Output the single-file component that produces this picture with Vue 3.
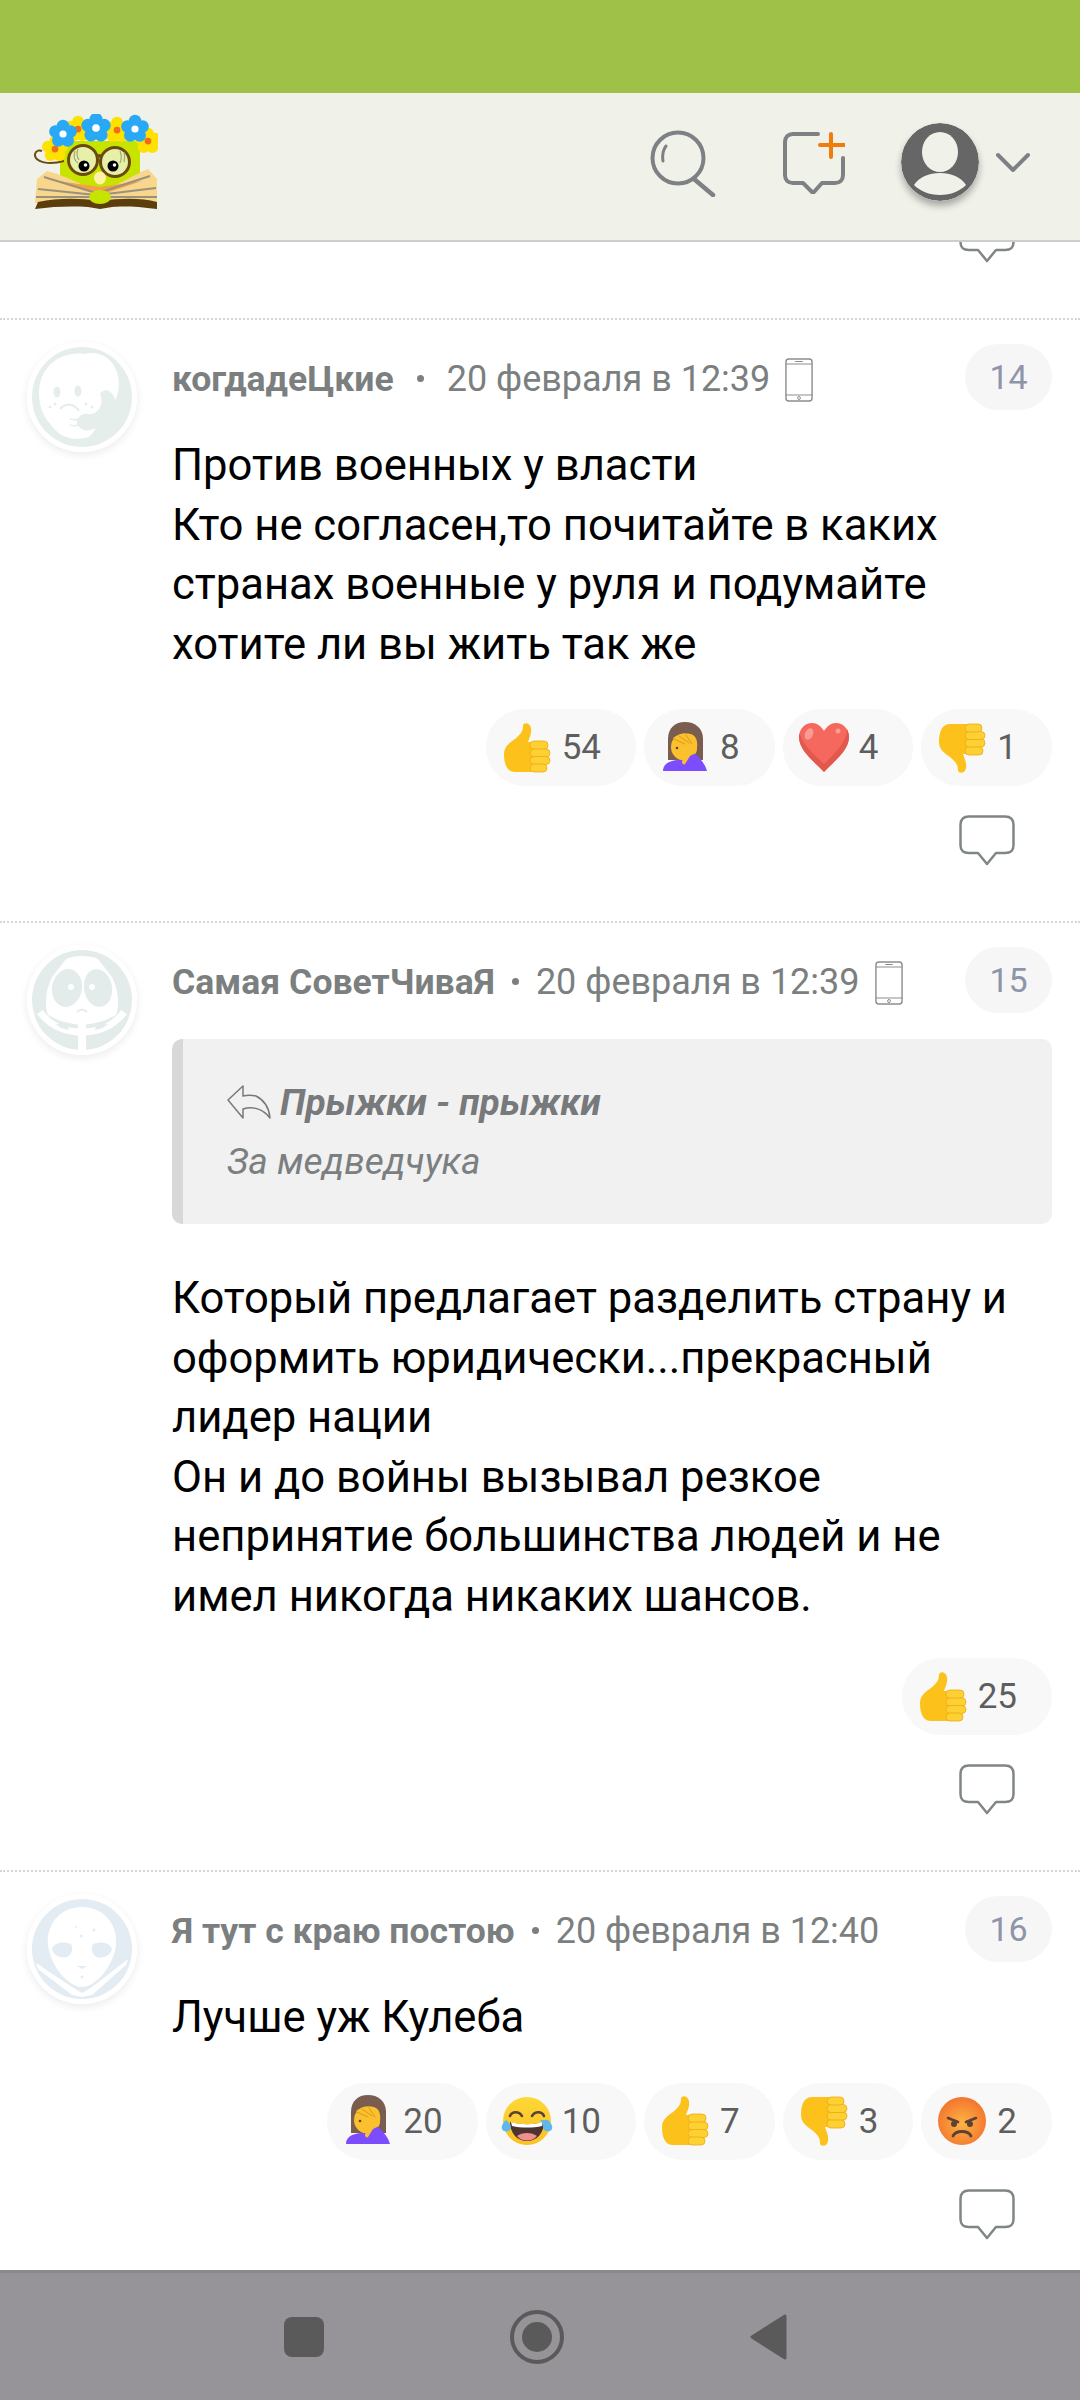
<script setup>
const comments = [
  {
    id: 14,
    name: 'когдадеЦкие',
    date: '20 февраля в 12:39',
    avatar: 'elephant',
    phone: true,
    wideDot: true,
    text: 'Против военных у власти\nКто не согласен,то почитайте в каких странах военные у руля и подумайте хотите ли вы жить так же',
    reactions: [
      { icon: 'like', count: 54 },
      { icon: 'facepalm', count: 8 },
      { icon: 'heart', count: 4 },
      { icon: 'dislike', count: 1 },
    ],
  },
  {
    id: 15,
    name: 'Самая СоветЧиваЯ',
    date: '20 февраля в 12:39',
    avatar: 'monster',
    phone: true,
    quote: { author: 'Прыжки - прыжки', text: 'За медведчука' },
    text: 'Который предлагает разделить страну и оформить юридически...прекрасный лидер нации\nОн и до войны вызывал резкое непринятие большинства людей и не имел никогда никаких шансов.',
    reactions: [{ icon: 'like', count: 25 }],
  },
  {
    id: 16,
    name: 'Я тут с краю постою',
    date: '20 февраля в 12:40',
    avatar: 'alien',
    text: 'Лучше уж Кулеба',
    reactions: [
      { icon: 'facepalm', count: 20 },
      { icon: 'joy', count: 10 },
      { icon: 'like', count: 7 },
      { icon: 'dislike', count: 3 },
      { icon: 'angry', count: 2 },
    ],
  },
]

// flowers of the logo wreath
const flowers = [
  { x: 35, y: 58, r: 7.5, petal: '#ffe100', core: '#f26a1b' },
  { x: 58, y: 38, r: 7.5, petal: '#ffe100', core: '#f26a1b' },
  { x: 97, y: 39, r: 7.5, petal: '#ffe100', core: '#f26a1b' },
  { x: 128, y: 50, r: 7.5, petal: '#ffe100', core: '#f26a1b' },
  { x: 43, y: 43, r: 8, petal: '#29a9f5', core: '#fff' },
  { x: 76, y: 37, r: 8.5, petal: '#29a9f5', core: '#fff' },
  { x: 115, y: 38, r: 8, petal: '#29a9f5', core: '#fff' },
]
const petals = [0, 72, 144, 216, 288]
</script>

<template>
  <div class="page">
    <svg class="sprite" aria-hidden="true">
      <defs>
        <radialGradient id="angry-bg" cx="50%" cy="55%" r="55%">
          <stop offset="0" stop-color="#fcb643" />
          <stop offset="1" stop-color="#f4742f" />
        </radialGradient>
        <linearGradient id="joy-bg" x1="0" y1="0" x2="0" y2="1">
          <stop offset="0" stop-color="#fdd835" />
          <stop offset="1" stop-color="#fbbf24" />
        </linearGradient>
        <symbol id="like" viewBox="0 0 52 52">
          <path d="M3 32c0-7 5-11 11-15 6-5 8-8 8-13 0-4 7-4 8 2 1 6-2 10-3 14h10v30H14C7 50 3 44 3 32z" fill="#fcc21b" />
          <g fill="#fdd033" stroke="#eeaa12" stroke-width=".8">
            <rect x="29" y="19" width="18" height="8.5" rx="4" />
            <rect x="29" y="27" width="20" height="8" rx="4" />
            <rect x="29" y="34.5" width="20" height="8" rx="4" />
            <rect x="29" y="42" width="17" height="8" rx="4" />
          </g>
        </symbol>
        <symbol id="dislike" viewBox="0 0 52 52">
          <use href="#like" width="52" height="52" transform="matrix(1 0 0 -1 0 52)" />
        </symbol>
        <symbol id="heart" viewBox="0 0 52 52">
          <path d="M26 50C18 41 1 29 1 15 1 7 7 1 14 1c5 0 9 3 12 8 3-5 7-8 12-8 7 0 13 6 13 14 0 14-17 26-25 35z" fill="#f4685e" />
          <path d="M26 50c8-9 25-21 25-35 0-3-1-6-2-8 0 14-15 27-23 35-8-8-21-18-24-30-1 1-1 2-1 3 0 14 17 26 25 35z" fill="#e2574e" />
          <ellipse cx="11" cy="12" rx="4" ry="6" transform="rotate(25 11 12)" fill="#fa9b93" />
          <circle cx="40" cy="9" r="2.5" fill="#fa9b93" />
        </symbol>
        <symbol id="facepalm" viewBox="0 0 52 52">
          <path d="M9 38V17C9 6 16 0 26 0s18 6 18 17v21z" fill="#7b5d50" />
          <ellipse cx="25" cy="25" rx="13" ry="13.5" fill="#fbc02d" />
          <path d="M4 49c0-7 6-10 14-11h6l6 11z" fill="#7c4dff" />
          <path d="M27 31l6-2c6 5 13 12 15 20H22l4-8z" fill="#7c4dff" />
          <path d="M14 16c5-4 14-6 20-3 5 3 5 11 3 18l-6 3-5 8c-1 1-3 0-3-2l2-9-3-6z" fill="#fbc02d" />
          <path d="M15 17l11 5M20 14l10 7M27 13l6 9" fill="none" stroke="#d99a16" stroke-width="1" stroke-linecap="round" />
          <circle cx="18" cy="26" r="1.300" fill="#5d4037" />
        </symbol>
        <symbol id="joy" viewBox="0 0 52 52">
          <circle cx="26" cy="26" r="24" fill="url(#joy-bg)" />
          <path d="M9 21c2-5 9-5 12 0M31 21c3-5 10-5 12 0" fill="none" stroke="#5d4037" stroke-width="2.6" stroke-linecap="round" />
          <path d="M9 27c10 3 24 3 34 0 0 11-7 19-17 19S9 38 9 27z" fill="#4e342e" />
          <path d="M10 27c10 3 22 3 32 0l-1 4c-9 2-21 2-30 0z" fill="#fff" />
          <path d="M16 41c5-4 15-4 20 0-5 6-15 6-20 0z" fill="#ef8f8f" />
          <path d="M5 25c-3 3-5 6-4 9 1 3 6 3 8 1 2-3 0-7-4-10zM47 25c3 3 5 6 4 9-1 3-6 3-8 1-2-3 0-7-4-10z" fill="#5fb7ea" />
        </symbol>
        <symbol id="angry" viewBox="0 0 52 52">
          <circle cx="26" cy="26" r="24" fill="url(#angry-bg)" />
          <path d="M12 23l10 4M40 23l-10 4" stroke="#5d4037" stroke-width="2.6" stroke-linecap="round" />
          <circle cx="18" cy="29" r="3" fill="#5d4037" />
          <circle cx="34" cy="29" r="3" fill="#5d4037" />
          <path d="M17 41c3-6 15-6 18 0" fill="none" stroke="#5d4037" stroke-width="2.8" stroke-linecap="round" />
        </symbol>
      </defs>
    </svg>

    <div class="status-bar"></div>

    <header class="top-bar">
      <svg class="logo" viewBox="14 23 124 96" width="124" height="96">
        <path d="M40 50h80v36l-40 14-40-14z" fill="#c6e400" />
        <path d="M44 70C30 74 14 72 15 63c1-4 5-4 7-3" fill="none" stroke="#6b4a10" stroke-width="2" />
        <path d="M15 112l2-24 10-8c16 4 32 12 53 22 21-10 34-18 48-24l9 10v24z" fill="#f8d68c" />
        <path d="M80 104L38 90l42 6 42-6z" fill="#f3a04a" />
        <g stroke="#9a917c" stroke-width="2" fill="none">
          <path d="M18 98l58 6M16 106l60 0M24 86l52 16M136 97l-58 7M137 106l-60 0M130 85l-52 17" />
        </g>
        <path d="M15 118l3-7c20-4 40-4 62-1 22-3 42-3 57 1v7c-20-3-38-3-45-2l-12 2-12-2c-13-1-33-1-53 2z" fill="#5c3d0c" />
        <ellipse cx="80" cy="106" rx="11" ry="7" fill="#c6e400" />
        <g stroke="#6b4a10" stroke-width="3" fill="#e6f0a8">
          <circle cx="63" cy="69" r="14.5" />
          <circle cx="95" cy="71" r="14.5" />
          <path d="M77 66c2-2 3-2 4 0" fill="none" />
        </g>
        <path d="M55 60c-2 6 0 10 3 12M100 60c2 5 2 8 0 12M58 58c-2 5-1 8 1 11M104 61c1 4 1 7 0 10" fill="none" stroke="#9da877" stroke-width="1.2" />
        <circle cx="64" cy="75" r="5.5" fill="#000" />
        <circle cx="93" cy="75" r="5.5" fill="#000" />
        <circle cx="65.5" cy="74" r="1.8" fill="#fff" />
        <circle cx="94.5" cy="74" r="1.8" fill="#fff" />
        <ellipse cx="80" cy="87" rx="6" ry="6.5" fill="#fff2a8" />
        <g v-for="(f, i) in flowers" :key="i">
          <circle
            v-for="a in petals"
            :key="a"
            :cx="f.x + Math.cos((a * Math.PI) / 180 - 1.57) * f.r"
            :cy="f.y + Math.sin((a * Math.PI) / 180 - 1.57) * f.r"
            :r="f.r * 0.78"
            :fill="f.petal"
          />
          <circle :cx="f.x" :cy="f.y" :r="f.r * 0.45" :fill="f.core" />
        </g>
      </svg>

      <div class="top-actions">
        <svg class="search-icon" viewBox="0 0 66 67" width="66" height="67">
          <circle cx="28" cy="28" r="25.5" fill="none" stroke="#7d8183" stroke-width="4" />
          <path d="M44 49l19 16" fill="none" stroke="#7d8183" stroke-width="4.5" stroke-linecap="round" />
          <path d="M13 31c-1-6 0-11 3-15" fill="none" stroke="#7d8183" stroke-width="3" stroke-linecap="round" />
        </svg>
        <svg class="add-icon" viewBox="0 0 62 62" width="62" height="62">
          <path d="M35 2H10C5 2 2 5 2 10v33c0 5 3 8 8 8h10l10 10 9-10h13c5 0 8-3 8-8V26" fill="none" stroke="#7d8183" stroke-width="4" stroke-linecap="round" stroke-linejoin="round" />
          <path d="M48 2v23M37 13h25" fill="none" stroke="#ef7d0c" stroke-width="4" stroke-linecap="round" />
        </svg>
        <div class="user-menu">
          <svg class="user-icon" viewBox="0 0 78 78" width="78" height="78">
            <circle cx="39" cy="39" r="39" fill="#666" />
            <ellipse cx="39" cy="29" rx="18" ry="20" fill="#f0f1e9" />
            <path d="M13 62c5-8 15-12 26-12s21 4 26 12c-6 6-15 10-26 10s-20-4-26-10z" fill="#f0f1e9" />
          </svg>
          <svg class="chevron" viewBox="0 0 34 20" width="34" height="20">
            <path d="M2 3l15 15L32 3" fill="none" stroke="#7d8183" stroke-width="4" stroke-linecap="round" stroke-linejoin="round" />
          </svg>
        </div>
      </div>
    </header>

    <main class="feed">
      <div class="prev-tail">
        <svg class="reply-bubble" viewBox="0 0 56 51" width="56" height="51">
          <path d="M10 1.5h36c6 0 8.500 3 8.500 8.500v20c0 6-2.500 8-8.500 8h-9l-9 11-9-11h-9c-6 0-8.500-2-8.500-8V10c0-5.500 2.500-8.500 8.500-8.500z" fill="#fff" stroke="#808587" stroke-width="2.5" stroke-linejoin="round" />
        </svg>
      </div>

      <article v-for="c in comments" :key="c.id" class="comment">
        <div class="avatar">
          <svg v-if="c.avatar === 'elephant'" viewBox="0 0 100 100">
            <circle cx="50" cy="50" r="50" fill="#e6eeec" />
            <path d="M7 45C8 18 30 4 52 7c10-3 22 0 29 10 5 8 8 20 4 32-4 10-12 15-19 15 2 10-2 20-9 26-14 4-28 2-38-12C10 68 7 58 7 45z" fill="#fff" />
            <path d="M68 47c4 9 0 17-8 20 5 2 15 4 21-2 4-5 3-12 0-17-4-6-10-6-13-1z" fill="#e6eeec" />
            <path d="M55 67c-5-1-10 4-10 8 0 5 6 10 14 8 8-2 13-9 8-15-3-2-8-1-12-1z" fill="#e6eeec" />
            <ellipse cx="25" cy="45" rx="3.500" ry="5.500" fill="#e6eeec" />
            <ellipse cx="46" cy="44" rx="3.500" ry="5.500" fill="#e6eeec" />
            <path d="M28 62c5-6 14-6 19 2" fill="none" stroke="#e6eeec" stroke-width="2" />
            <path d="M38 72c4 1 7 1 9 0M38 78c3 1 6 1 9 0" fill="none" stroke="#e6eeec" stroke-width="1.500" />
            <circle cx="18" cy="60" r="1.500" fill="#e6eeec" />
            <circle cx="23" cy="57" r="1.500" fill="#e6eeec" />
            <circle cx="54" cy="57" r="1.500" fill="#e6eeec" />
            <circle cx="60" cy="60" r="1.500" fill="#e6eeec" />
          </svg>
          <svg v-else-if="c.avatar === 'monster'" viewBox="0 0 100 100">
            <circle cx="50" cy="50" r="50" fill="#e3ecea" />
            <path d="M34 9c8-4 24-4 32 0l14 18c6 12 8 26 4 38-8 4-14 8-34 10-20-2-26-6-34-10-4-12-2-26 4-38z" fill="#fff" />
            <path d="M8 62c10 14 26 20 42 20s32-6 42-20" fill="none" stroke="#fff" stroke-width="7" />
            <rect x="46" y="74" width="8" height="26" fill="#fff" />
            <ellipse cx="35" cy="38" rx="15" ry="19" fill="#e3ecea" transform="rotate(10 35 38)" />
            <ellipse cx="66" cy="38" rx="14" ry="19" fill="#e3ecea" transform="rotate(-10 66 38)" />
            <circle cx="39" cy="37" r="3" fill="#fff" />
            <circle cx="60" cy="37" r="3" fill="#fff" />
            <path d="M45 62c3-3 7-3 10 0" fill="none" stroke="#e3ecea" stroke-width="2" />
            <path d="M24 74c4 4 8 5 13 6l-2-7zM76 74c-4 4-8 5-13 6l2-7z" fill="#e3ecea" />
          </svg>
          <svg v-else viewBox="0 0 100 100">
            <circle cx="50" cy="50" r="50" fill="#e3ecf2" />
            <path d="M50 8c24 0 36 20 34 38-2 20-20 42-34 42S18 66 16 46C14 28 26 8 50 8z" fill="#fff" />
            <path d="M4 64l36 24 10 6 10-6 36-28-2 6-34 30-10 2-10-2-34-26z" fill="#fff" />
            <path d="M20 50c2-7 12-8 19-5 2 4 2 10-4 13-7 2-14-2-15-8zM80 50c-2-7-12-8-19-5-2 4-2 10 4 13 7 2 14-2 15-8z" fill="#e3ecf2" />
            <circle cx="44" cy="28" r="1" fill="#e3ecf2" />
            <circle cx="62" cy="31" r="1.500" fill="#e3ecf2" />
            <circle cx="49" cy="37" r="1.500" fill="#e3ecf2" />
            <path d="M45 67h10l-5 3z" fill="#e3ecf2" />
            <circle cx="50" cy="78" r="1.500" fill="#e3ecf2" />
          </svg>
        </div>

        <div class="comment-main">
          <div class="comment-head">
            <span class="author">{{ c.name }}</span>
            <span class="dot" :class="{ wide: c.wideDot }"></span>
            <span class="date">{{ c.date }}</span>
            <svg v-if="c.phone" class="phone" viewBox="0 0 30 44" width="28" height="44" preserveAspectRatio="none">
              <rect x="1" y="1" width="28" height="42" rx="3" fill="none" stroke="#8a8d8f" stroke-width="1.500" />
              <path d="M1 6h28M1 37h28M11 3.500h8" fill="none" stroke="#8a8d8f" stroke-width="1.200" />
              <circle cx="15" cy="40" r="1.500" fill="none" stroke="#8a8d8f" />
            </svg>
            <span class="number">{{ c.id }}</span>
          </div>

          <blockquote v-if="c.quote" class="quote">
            <div class="quote-author">
              <svg viewBox="0 0 44 34" width="44" height="34">
                <path d="M16 1L1 15l15 18v-9c10-3 20 0 27 9-1-12-6-18-14-22-4-1-9-1-13 0z" fill="none" stroke="#77797b" stroke-width="1.500" stroke-linejoin="round" />
              </svg>
              <span>{{ c.quote.author }}</span>
            </div>
            <div class="quote-text">{{ c.quote.text }}</div>
          </blockquote>

          <p class="body" :class="{ 'after-quote': c.quote }">{{ c.text }}</p>

          <div class="reactions">
            <div v-for="r in c.reactions" :key="r.icon" class="reaction">
              <svg class="emoji" width="52" height="52"><use :href="'#' + r.icon" /></svg>
              <span>{{ r.count }}</span>
            </div>
          </div>

          <div class="comment-foot">
            <svg class="reply-bubble" viewBox="0 0 56 51" width="56" height="51">
              <path d="M10 1.5h36c6 0 8.500 3 8.500 8.500v20c0 6-2.500 8-8.500 8h-9l-9 11-9-11h-9c-6 0-8.500-2-8.500-8V10c0-5.500 2.500-8.500 8.500-8.500z" fill="#fff" stroke="#808587" stroke-width="2.5" stroke-linejoin="round" />
            </svg>
          </div>
        </div>
      </article>
    </main>

    <nav class="nav-bar">
      <svg viewBox="0 0 40 40" width="40" height="40"><rect width="40" height="40" rx="8" fill="#5a5a5a" /></svg>
      <svg viewBox="0 0 54 54" width="54" height="54">
        <circle cx="27" cy="27" r="25" fill="none" stroke="#5a5a5a" stroke-width="4" />
        <circle cx="27" cy="27" r="15" fill="#5a5a5a" />
      </svg>
      <svg viewBox="0 0 37 46" width="37" height="46">
        <path d="M35 2L2 23l33 21z" fill="#5a5a5a" stroke="#5a5a5a" stroke-width="3" stroke-linejoin="round" />
      </svg>
    </nav>
  </div>
</template>

<style>
html,
body {
  margin: 0;
  background: #fff;
}
</style>

<style scoped>
.page {
  width: 1080px;
  height: 2400px;
  display: flex;
  flex-direction: column;
  overflow: hidden;
  font-family: Roboto, "Liberation Sans", sans-serif;
  background: #fff;
}

.sprite {
  position: absolute;
  width: 0;
  height: 0;
}

.status-bar {
  height: 93px;
  flex: none;
  background: #9fc147;
}

.top-bar {
  height: 137px;
  flex: none;
  display: flex;
  align-items: center;
  justify-content: space-between;
  padding: 0 50px 10px 34px;
  background: #f0f1e9;
  border-bottom: 2px solid #cdcdcd;
}

.logo {
  display: block;
}

.top-actions {
  display: flex;
  align-items: center;
}

.search-icon {
  display: block;
  margin-right: 67px;
  margin-top: 3px;
}

.add-icon {
  display: block;
  margin-right: 56px;
  margin-top: 3px;
}

.user-menu {
  display: flex;
  align-items: center;
  gap: 17px;
}

.user-icon {
  display: block;
  border-radius: 50%;
  box-shadow: 0 5px 7px rgba(0, 0, 0, 0.3);
}

.feed {
  flex: 1;
  min-height: 0;
  overflow: hidden;
}

.prev-tail {
  height: 76px;
  overflow: hidden;
  display: flex;
  justify-content: flex-end;
  padding-right: 65px;
  box-sizing: border-box;
}

.prev-tail .reply-bubble {
  margin-top: -30px;
}

.comment {
  display: flex;
  gap: 35px;
  padding: 22px 28px 55px 27px;
  border-top: 2px dotted #d6d6d6;
}

.avatar {
  width: 100px;
  height: 100px;
  flex: none;
  border: 5px solid #fff;
  border-radius: 50%;
  box-shadow: 0 3px 8px rgba(0, 0, 0, 0.08);
}

.avatar svg {
  display: block;
  width: 100px;
  height: 100px;
}

.comment-main {
  flex: 1;
  min-width: 0;
  padding-top: 2px;
}

.comment-head {
  display: flex;
  align-items: center;
  height: 66px;
  margin-bottom: 26px;
}

.author {
  padding-top: 3px;
  font-size: 35.6px;
  font-weight: 700;
  color: #7b7f80;
  white-space: nowrap;
}

.dot {
  width: 7px;
  height: 7px;
  margin: 3px 17px 0;
  border-radius: 50%;
  background: #7b7f80;
  flex: none;
}

.dot.wide {
  margin: 3px 23px 0;
}

.date {
  padding-top: 3px;
  font-size: 36px;
  color: #7b7f80;
  white-space: nowrap;
}

.phone {
  margin: 5px 0 0 15px;
  flex: none;
}

.number {
  margin-left: auto;
  width: 87px;
  height: 66px;
  border-radius: 33px;
  background: #f6f6f6;
  display: flex;
  align-items: center;
  justify-content: center;
  font-size: 34px;
  color: #8d95a8;
}

.quote {
  margin: 2px 0 0;
  padding: 33px 20px 32px 44px;
  background: #f1f1f1;
  border-left: 11px solid #d8d8d8;
  border-radius: 10px;
}

.quote-author {
  display: flex;
  align-items: center;
  gap: 9px;
  height: 60px;
  font-size: 37px;
  font-weight: 700;
  font-style: italic;
  color: #77797b;
}

.quote-text {
  height: 60px;
  line-height: 60px;
  font-size: 37px;
  font-style: italic;
  color: #7b7f80;
}

.body {
  margin: 0 0 35px;
  font-size: 43.6px;
  line-height: 59.5px;
  color: #000;
  white-space: pre-line;
}

.body.after-quote {
  margin-top: 45px;
  margin-bottom: 32px;
}

.reactions {
  display: flex;
  justify-content: flex-end;
  gap: 8px;
}

.reaction {
  display: flex;
  align-items: center;
  gap: 9px;
  height: 77px;
  padding: 0 35px 0 15px;
  border-radius: 38px;
  background: #f8f8f8;
  font-size: 35px;
  color: #5e5e5e;
}

.emoji {
  display: block;
  flex: none;
}

.comment-foot {
  display: flex;
  justify-content: flex-end;
  margin-top: 29px;
  padding-right: 37px;
}

.reply-bubble {
  display: block;
}

.nav-bar {
  height: 127px;
  flex: none;
  display: flex;
  align-items: center;
  justify-content: center;
  gap: 186px;
  padding-right: 10px;
  background: #969499;
  border-top: 3px solid #8b898e;
}
</style>
